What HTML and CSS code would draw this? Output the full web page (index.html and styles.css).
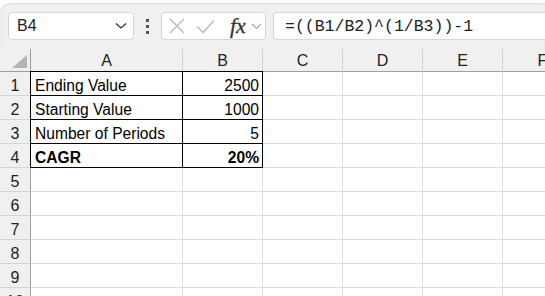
FILE: index.html
```html
<!DOCTYPE html>
<html lang="en">
<head>
    <meta charset="UTF-8">
    <title>CAGR sheet</title>
    <link rel="stylesheet" href="styles.css">
</head>
<body>
    <div class="toolbar">
        <div class="name-box">
            <span>B4</span>
            <svg width="12" height="8" viewBox="0 0 12 8"><path d="M1 1.5 L6 6 L11 1.5" fill="none" stroke="#333" stroke-width="1.3"/></svg>
        </div>
        <div class="dots"><i></i><i></i><i></i></div>
        <div class="fx-buttons">
            <svg width="16" height="16" viewBox="0 0 16 16"><path d="M1 1 L15 15 M15 1 L1 15" stroke="#b8b8b8" stroke-width="1.3"/></svg>
            <svg width="19" height="15" viewBox="0 0 19 15"><path d="M1 7.5 L7 13.5 L18 1.5" fill="none" stroke="#b8b8b8" stroke-width="1.3"/></svg>
            <span class="fx">fx</span>
            <svg width="11" height="7" viewBox="0 0 11 7"><path d="M1 1 L5.5 5.5 L10 1" fill="none" stroke="#a8a8a8" stroke-width="1.2"/></svg>
        </div>
        <div class="formula">=((B1/B2)^(1/B3))-1</div>
    </div>

    <div class="sheet">
        <div class="hd corner"><svg width="15" height="13" viewBox="0 0 15 13"><polygon points="15,0 15,13 0,13" fill="#b5b5b5"/></svg></div>
        <div class="hd col">A</div>
        <div class="hd col">B</div>
        <div class="hd col">C</div>
        <div class="hd col">D</div>
        <div class="hd col">E</div>
        <div class="hd col">F</div>

        <div class="hd row">1</div>
        <div class="cell box first top">Ending Value</div>
        <div class="cell box num top">2500</div>
        <div class="cell"></div><div class="cell"></div><div class="cell"></div><div class="cell"></div>

        <div class="hd row">2</div>
        <div class="cell box first">Starting Value</div>
        <div class="cell box num">1000</div>
        <div class="cell"></div><div class="cell"></div><div class="cell"></div><div class="cell"></div>

        <div class="hd row">3</div>
        <div class="cell box first">Number of Periods</div>
        <div class="cell box num">5</div>
        <div class="cell"></div><div class="cell"></div><div class="cell"></div><div class="cell"></div>

        <div class="hd row">4</div>
        <div class="cell box first bold">CAGR</div>
        <div class="cell box num bold">20%</div>
        <div class="cell"></div><div class="cell"></div><div class="cell"></div><div class="cell"></div>

        <div class="hd row">5</div>
        <div class="cell"></div><div class="cell"></div><div class="cell"></div><div class="cell"></div><div class="cell"></div><div class="cell"></div>
        <div class="hd row">6</div>
        <div class="cell"></div><div class="cell"></div><div class="cell"></div><div class="cell"></div><div class="cell"></div><div class="cell"></div>
        <div class="hd row">7</div>
        <div class="cell"></div><div class="cell"></div><div class="cell"></div><div class="cell"></div><div class="cell"></div><div class="cell"></div>
        <div class="hd row">8</div>
        <div class="cell"></div><div class="cell"></div><div class="cell"></div><div class="cell"></div><div class="cell"></div><div class="cell"></div>
        <div class="hd row">9</div>
        <div class="cell"></div><div class="cell"></div><div class="cell"></div><div class="cell"></div><div class="cell"></div><div class="cell"></div>
        <div class="hd row">10</div>
        <div class="cell"></div><div class="cell"></div><div class="cell"></div><div class="cell"></div><div class="cell"></div><div class="cell"></div>
    </div>
</body>
</html>
```

FILE: styles.css
```css
/* Spreadsheet view */
body {
    margin: 0;
    background-color: #ffffff;
    font-family: "Liberation Sans", Arial, sans-serif;
    overflow: hidden;
}

.toolbar {
    margin-top: 3px;
    height: 46px;
    background-color: #f0f0f0;
    border-top-left-radius: 9px;
    box-shadow: inset 0 1px 2px rgba(0, 0, 0, 0.08);
    display: flex;
    align-items: flex-start;
    padding: 9px 0 0 8px;
    box-sizing: border-box;
}

.name-box, .fx-buttons, .formula {
    height: 28px;
    box-sizing: border-box;
    background-color: #ffffff;
    border: 1px solid #d6d6d6;
    border-radius: 4px;
    display: flex;
    align-items: center;
}

.name-box {
    width: 126px;
    padding: 0 6px 0 8px;
    justify-content: space-between;
    font-size: 16px;
    color: #222;
}

.dots {
    width: 27px;
    height: 28px;
    display: flex;
    flex-direction: column;
    align-items: center;
    justify-content: center;
    gap: 3px;
}

.dots i {
    width: 3px;
    height: 3px;
    background-color: #555;
}

.fx-buttons {
    width: 105px;
    padding: 0 0 0 7px;
    gap: 11px;
}

.fx {
    font-family: "Liberation Serif", serif;
    font-style: italic;
    font-size: 22px;
    color: #333;
    margin-left: 4px;
    margin-right: -6px;
    line-height: 1;
    -webkit-text-stroke: 0.3px #333;
}

.formula {
    margin-left: 7px;
    flex: 1;
    border-right: none;
    border-top-right-radius: 0;
    border-bottom-right-radius: 0;
    padding-left: 11px;
    font-family: "Liberation Mono", monospace;
    font-size: 16.5px;
    color: #222;
}

.sheet {
    display: grid;
    grid-template-columns: 31px 152px 80px 80px 80px 80px 80px;
    grid-template-rows: 23px repeat(10, 24px);
    font-size: 15.6px;
}

.hd {
    background-color: #f0f0f0;
    color: #222;
    display: flex;
    align-items: center;
    justify-content: center;
    box-sizing: border-box;
    font-size: 16px;
}

.col {
    border-right: 1px solid #d4d4d4;
    border-bottom: 1px solid #9e9e9e;
    padding-top: 1px;
}

.row {
    border-right: 1px solid #9e9e9e;
    border-bottom: 1px solid #d4d4d4;
    padding-top: 4px;
}

.corner {
    border-right: 1px solid #9e9e9e;
    border-bottom: 1px solid #9e9e9e;
    align-items: flex-end;
    justify-content: flex-end;
    padding: 0 3px 3px 0;
}

.cell {
    border-right: 1px solid #dcdcdc;
    border-bottom: 1px solid #dcdcdc;
    box-sizing: border-box;
    display: flex;
    align-items: center;
    padding: 4px 3px 0 4px;
    color: #000;
    white-space: nowrap;
}

.cell.box {
    border-color: #000;
}

.cell.first {
    box-shadow: -1px 0 0 #000;
}

.cell.top {
    box-shadow: 0 -1px 0 #000;
}

.cell.first.top {
    box-shadow: -1px 0 0 #000, 0 -1px 0 #000, -1px -1px 0 #000;
}

.num {
    justify-content: flex-end;
}

.bold {
    font-weight: bold;
}
```
